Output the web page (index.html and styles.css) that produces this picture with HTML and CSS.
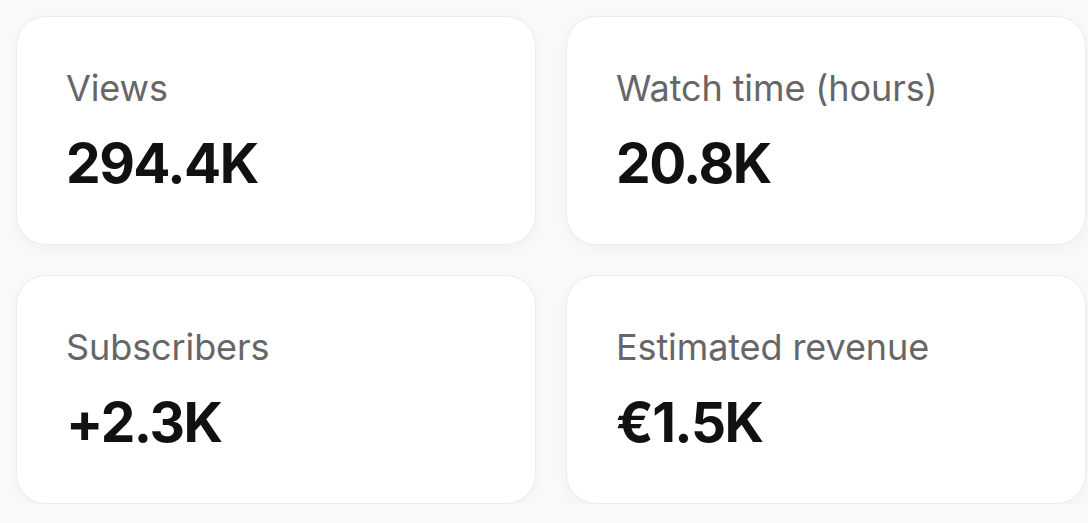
FILE: index.html
```html
<!DOCTYPE html>
<html>
<head>
<meta charset="utf-8">
<link rel="stylesheet" href="styles.css">
</head>
<body>
<div class="grid">
  <div class="card">
    <div class="label">Views</div>
    <div class="value">294.4K</div>
  </div>
  <div class="card">
    <div class="label">Watch time (hours)</div>
    <div class="value">20.8K</div>
  </div>
  <div class="card">
    <div class="label">Subscribers</div>
    <div class="value">+2.3K</div>
  </div>
  <div class="card">
    <div class="label">Estimated revenue</div>
    <div class="value">€1.5K</div>
  </div>
</div>
</body>
</html>
```
FILE: styles.css
```css
html, body {
  margin: 0;
  background: #f9f9f9;
}
body {
  padding: 16px 2px 0 16px;
  font-family: Inter, "Noto Sans", sans-serif;
}
.grid {
  display: grid;
  grid-template-columns: 520px 520px;
  column-gap: 30px;
  row-gap: 30px;
}
.card {
  background: #fff;
  border: 1px solid #ececec;
  border-radius: 30px;
  box-shadow: 0 4px 14px rgba(0, 0, 0, 0.035);
  padding: 49px 50px 48px 49px;
}
.label {
  font-size: 36px;
  line-height: 44px;
  color: #666;
  font-weight: 400;
  letter-spacing: -0.1px;
}
.value {
  margin-top: 20px;
  font-size: 55px;
  line-height: 66px;
  font-weight: 700;
  color: #111;
  letter-spacing: -1.5px;
}
```
